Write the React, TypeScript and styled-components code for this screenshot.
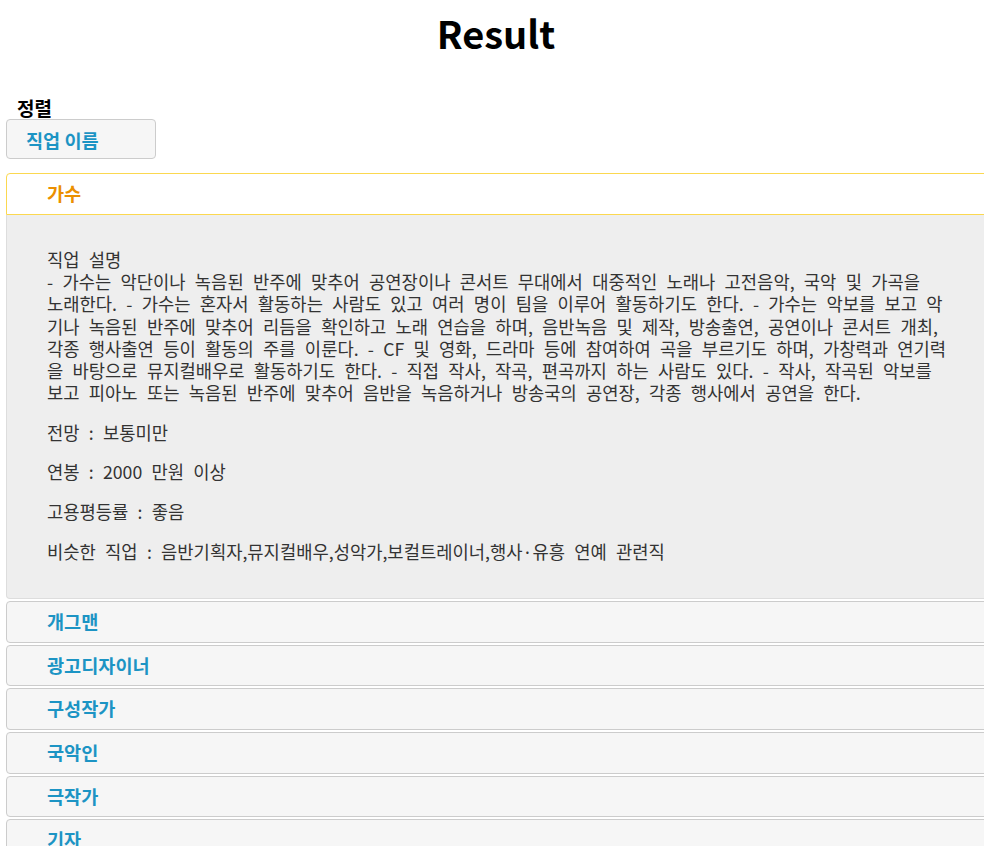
import React from "react";
import styled, { createGlobalStyle } from "styled-components";

const GlobalStyle = createGlobalStyle`
  html, body {
    margin: 0;
    padding: 0;
    background: #ffffff;
    font-family: "Noto Sans CJK KR", "Noto Sans", sans-serif;
  }
`;

const Page = styled.div`
  overflow-x: hidden;
  padding-left: 6px;
  padding-bottom: 40px;
`;

const Title = styled.h1`
  margin: 13px 0 0;
  padding-left: 2px;
  text-align: center;
  font-size: 38px;
  line-height: 40px;
  font-weight: 700;
  color: #000000;
`;

const SortLabel = styled.div`
  margin: 44px 0 0 11px;
  font-size: 19px;
  line-height: 22px;
  font-weight: 700;
  color: #000000;
`;

const SortButton = styled.button`
  display: flex;
  align-items: center;
  box-sizing: border-box;
  width: 150px;
  height: 40px;
  margin: 0;
  padding: 0 0 0 19px;
  border: 1px solid #cccccc;
  border-radius: 4px;
  background: #f6f6f6;
  color: #1c94c4;
  font-family: inherit;
  font-size: 18.6px;
  font-weight: 700;
  cursor: pointer;
`;

const Accordion = styled.div`
  margin-top: 14px;
  margin-right: -30px;
`;

const Header = styled.div<{ $active?: boolean }>`
  margin-top: 2px;
  padding: 8px 8px 9.6px 40px;
  line-height: 22px;
  font-size: 18.6px;
  font-weight: 700;
  border: 1px solid ${(p) => (p.$active ? "#fbd850" : "#cccccc")};
  border-radius: ${(p) => (p.$active ? "4px 4px 0 0" : "4px")};
  background: ${(p) => (p.$active ? "#ffffff" : "#f6f6f6")};
  color: ${(p) => (p.$active ? "#eb8f00" : "#1c94c4")};
  cursor: pointer;
`;

const Content = styled.div`
  padding: 16px 40px 19px 40px;
  border: 1px solid #dddddd;
  border-top: 0;
  border-radius: 0 0 4px 4px;
  background: #eeeeee;
  color: #333333;
  font-size: 17.7px;
  line-height: 22.2px;
  word-spacing: 5.3px;
`;

const Para = styled.p`
  margin: 17.4px 0;
`;

const Line = styled.span`
  display: block;
  white-space: nowrap;
`;

const descLines = [
  "직업 설명",
  "- 가수는 악단이나 녹음된 반주에 맞추어 공연장이나 콘서트 무대에서 대중적인 노래나 고전음악, 국악 및 가곡을",
  "노래한다. - 가수는 혼자서 활동하는 사람도 있고 여러 명이 팀을 이루어 활동하기도 한다. - 가수는 악보를 보고 악",
  "기나 녹음된 반주에 맞추어 리듬을 확인하고 노래 연습을 하며, 음반녹음 및 제작, 방송출연, 공연이나 콘서트 개최,",
  "각종 행사출연 등이 활동의 주를 이룬다. - CF 및 영화, 드라마 등에 참여하여 곡을 부르기도 하며, 가창력과 연기력",
  "을 바탕으로 뮤지컬배우로 활동하기도 한다. - 직접 작사, 작곡, 편곡까지 하는 사람도 있다. - 작사, 작곡된 악보를",
  "보고 피아노 또는 녹음된 반주에 맞추어 음반을 녹음하거나 방송국의 공연장, 각종 행사에서 공연을 한다.",
];

const details = [
  "전망 : 보통미만",
  "연봉 : 2000 만원 이상",
  "고용평등률 : 좋음",
  "비슷한 직업 : 음반기획자,뮤지컬배우,성악가,보컬트레이너,행사·유흥 연예 관련직",
];

const others = ["개그맨", "광고디자이너", "구성작가", "국악인", "극작가", "기자", "네일아티스트"];

export default function App() {
  return (
    <>
      <GlobalStyle />
      <Page>
        <Title>Result</Title>
        <SortLabel>정렬</SortLabel>
        <SortButton>직업 이름</SortButton>
        <Accordion>
          <Header $active>가수</Header>
          <Content>
            <Para>
              {descLines.map((l, i) => (
                <Line key={i}>{l}</Line>
              ))}
            </Para>
            {details.map((d, i) => (
              <Para key={i}>{d}</Para>
            ))}
          </Content>
          {others.map((o) => (
            <Header key={o}>{o}</Header>
          ))}
        </Accordion>
      </Page>
    </>
  );
}
